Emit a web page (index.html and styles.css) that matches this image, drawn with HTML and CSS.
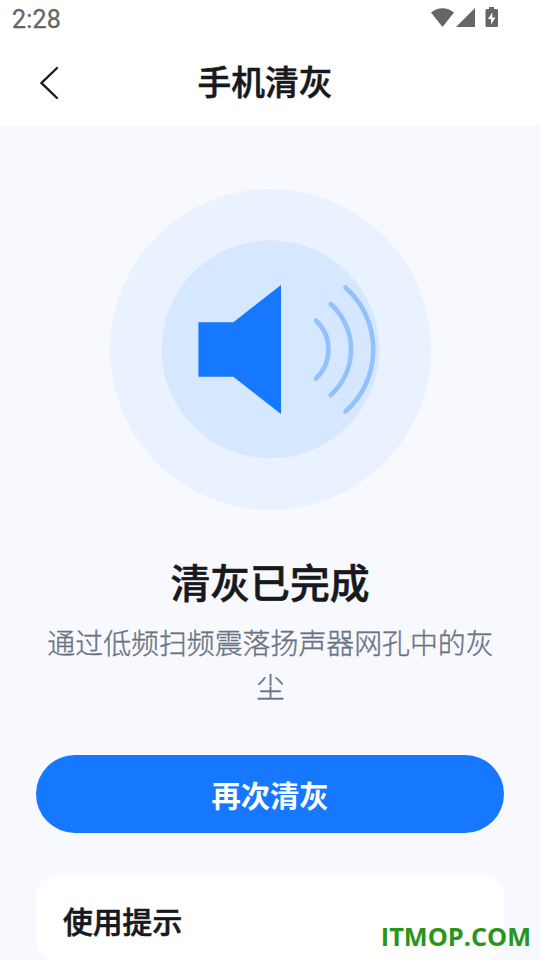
FILE: index.html
```html
<!DOCTYPE html>
<html lang="zh-CN">
<head>
<meta charset="utf-8">
<title>手机清灰</title>
<link rel="stylesheet" href="styles.css">
</head>
<body>
<div class="screen">
  <header class="top">
    <div class="status">
      <span class="time">2:28</span>
      <svg class="sys" width="68" height="28" viewBox="0 0 68 28">
        <path d="M0 12.500C7 6.700 16 6.700 23 12.500L11.500 27Z"/>
        <path d="M25 27H44V8Z"/>
        <path fill-rule="evenodd" d="M58 7h5v2h2.500q1.500 0 1.500 1.500v15q0 1.500-1.500 1.500h-9.500q-1.500 0-1.500-1.500v-15q0-1.500 1.500-1.500H58zM61.300 12.500L57 19h3v5.500L64.500 17.500h-3.200z"/>
      </svg>
    </div>
    <nav class="bar">
      <svg class="back" width="20" height="34" viewBox="0 0 20 34"><path d="M18 2L2.500 17L18 32"/></svg>
      <h1 class="title">手机清灰</h1>
    </nav>
  </header>
  <main class="main">
    <svg class="hero" width="322" height="322" viewBox="109 189 322 322">
      <circle cx="270.500" cy="349.500" r="160.500" fill="#eaf2ff"/>
      <circle cx="270.500" cy="349.300" r="109" fill="#d6e8ff"/>
      <path d="M198.400 322.200H233.300L281 285V414L233.300 376.700H198.400Z" fill="#1677ff"/>
      <g class="waves">
        <path d="M316 320.500A40 40 0 0 1 316 378.500"/>
        <path d="M330.700 304A61 61 0 0 1 330.700 395"/>
        <path d="M345.500 287.500A83 83 0 0 1 345.500 411.500"/>
      </g>
    </svg>
    <h2 class="done">清灰已完成</h2>
    <p class="desc">通过低频扫频震落扬声器网孔中的灰尘</p>
    <button class="again">再次清灰</button>
    <section class="tips"><h3 class="tips-title">使用提示</h3></section>
  </main>
  <div class="mark">ITMOP.COM</div>
</div>
</body>
</html>
```
FILE: styles.css
```css
* { box-sizing: border-box; margin: 0; padding: 0; }
body { width: 540px; height: 960px; overflow: hidden; font-family: "Noto Sans CJK SC", sans-serif; color: #17191e; }
.screen { position: relative; height: 960px; overflow: hidden; background: #f7f9fe; display: flex; flex-direction: column; }
.top { height: 126px; flex: none; background: #fff; }
.status { height: 38px; display: flex; justify-content: space-between; padding: 0 41px 0 12px; }
.time { font: 400 25px/40px Roboto, sans-serif; color: #666; letter-spacing: .2px; -webkit-text-stroke: .3px #666; }
.sys { fill: #666; }
.bar { height: 88px; display: flex; align-items: center; justify-content: center; position: relative; padding-right: 10px; }
.back { position: absolute; left: 39px; top: 28px; fill: none; stroke: #17191e; stroke-width: 2.4; stroke-linecap: round; }
.title { margin-top: -2px; font-size: 33.700px; line-height: 50px; font-weight: 500; }
.title, .done, .tips-title { -webkit-text-stroke: .6px currentColor; }
.main { flex: 1; padding: 63px 36px 0; display: flex; flex-direction: column; align-items: center; }
.hero { flex: none; }
.waves { fill: none; stroke: #93c1ff; stroke-width: 4.600; stroke-linecap: round; }
.done { margin-top: 41px; font-size: 39.800px; line-height: 58px; font-weight: 500; }
.desc { margin-top: 11px; padding-left: 1px; font-size: 27.900px; line-height: 43.500px; font-weight: 300; color: #6b7280; text-align: center; -webkit-text-stroke: .35px #6b7280; }
.again { flex: none; margin-top: 47px; width: 468px; height: 78px; border: 0; border-radius: 39px; background: #1677ff; color: #fff; font: 700 29.300px/78px "Noto Sans CJK SC", sans-serif; }
.tips { flex: none; margin-top: 42px; width: 468px; height: 85px; border-radius: 21px; background: #fff; padding: 23px 27px; }
.tips-title { font-size: 29.800px; line-height: 44px; font-weight: 500; }
.mark { position: absolute; right: 9px; bottom: 7px; font: 700 25.300px/34px "Open Sans", sans-serif; color: #2a9518; }
```
